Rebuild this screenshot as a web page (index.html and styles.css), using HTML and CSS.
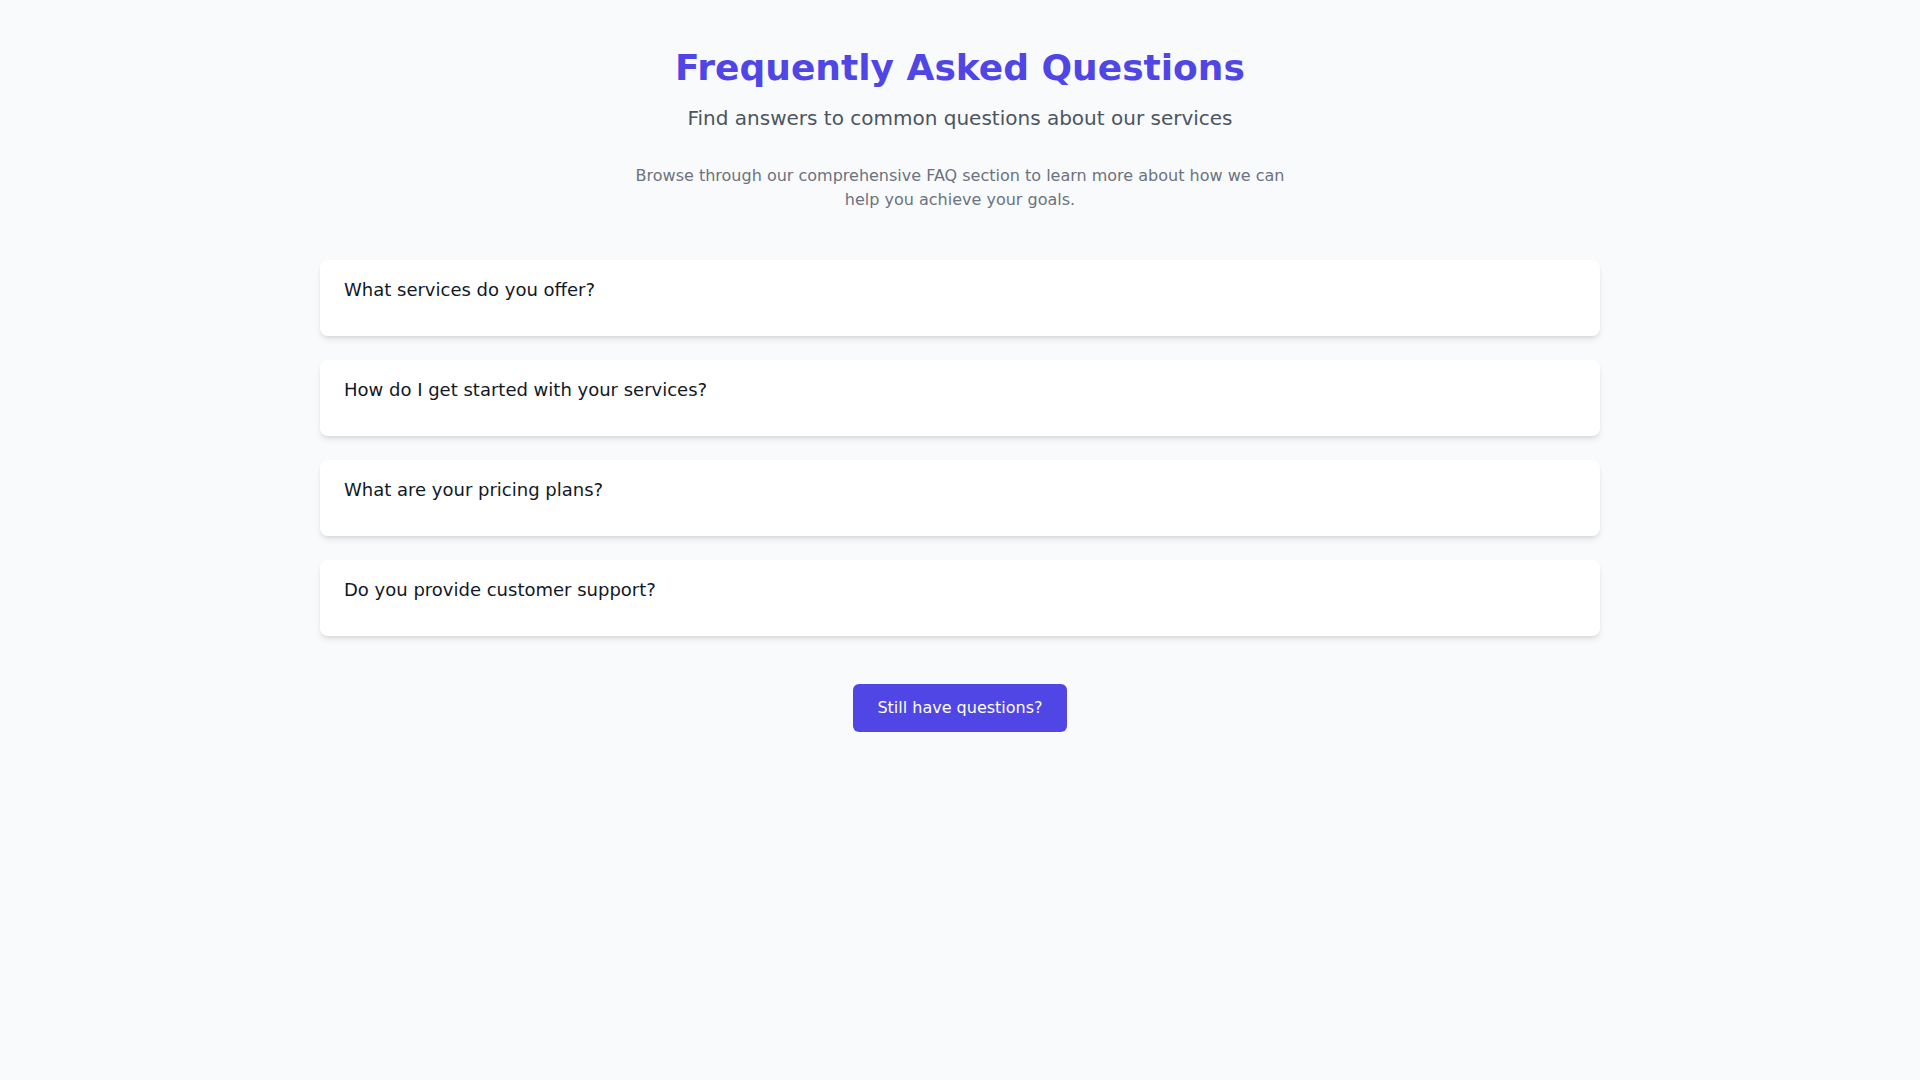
FILE: index.html
```html
<!DOCTYPE html>
<html lang="en">
<head>
<meta charset="utf-8">
<title>FAQ</title>
<link rel="stylesheet" href="styles.css">
</head>
<body>
<main class="page">
  <header class="intro">
    <h1 class="title">Frequently Asked Questions</h1>
    <p class="subtitle">Find answers to common questions about our services</p>
    <p class="lead">Browse through our comprehensive FAQ section to learn more about how we can help you achieve your goals.</p>
  </header>
  <section class="faq-list">
    <div class="faq-item"><button class="faq-question">What services do you offer?</button></div>
    <div class="faq-item"><button class="faq-question">How do I get started with your services?</button></div>
    <div class="faq-item"><button class="faq-question">What are your pricing plans?</button></div>
    <div class="faq-item"><button class="faq-question">Do you provide customer support?</button></div>
  </section>
  <div class="cta">
    <button class="cta-button">Still have questions?</button>
  </div>
</main>
</body>
</html>
```

FILE: styles.css
```css
* { box-sizing: border-box; }
html, body { margin: 0; padding: 0; }
body {
  background: #f9fafb;
  font-family: "DejaVu Sans", sans-serif;
  color: #111827;
  min-height: 1080px;
}
.page {
  max-width: 1280px;
  margin: 0 auto;
  padding: 48px 0;
}
.intro {
  text-align: center;
  margin-bottom: 48px;
}
.title {
  margin: 0 0 16px;
  font-size: 36px;
  line-height: 40px;
  font-weight: 700;
  color: #4f46e5;
}
.subtitle {
  margin: 0 0 32px;
  font-size: 20px;
  line-height: 28px;
  color: #4b5563;
}
.lead {
  margin: 0 auto;
  max-width: 672px;
  font-size: 16px;
  line-height: 24px;
  color: #6b7280;
}
.faq-list {
  display: flex;
  flex-direction: column;
  gap: 24px;
}
.faq-item {
  background: #ffffff;
  border-radius: 8px;
  box-shadow: 0 4px 6px -1px rgba(0,0,0,0.1), 0 2px 4px -2px rgba(0,0,0,0.1);
  padding: 16px 24px 32px;
}
.faq-question {
  display: block;
  width: 100%;
  padding: 0;
  border: 0;
  background: none;
  text-align: left;
  font-family: inherit;
  font-size: 18px;
  line-height: 28px;
  color: #111827;
  cursor: pointer;
}
.cta {
  display: flex;
  justify-content: center;
  margin-top: 48px;
}
.cta-button {
  background: #4f46e5;
  color: #ffffff;
  border: 0;
  border-radius: 6px;
  padding: 12px 24px;
  font-family: inherit;
  font-size: 16px;
  line-height: 24px;
  cursor: pointer;
}
```
